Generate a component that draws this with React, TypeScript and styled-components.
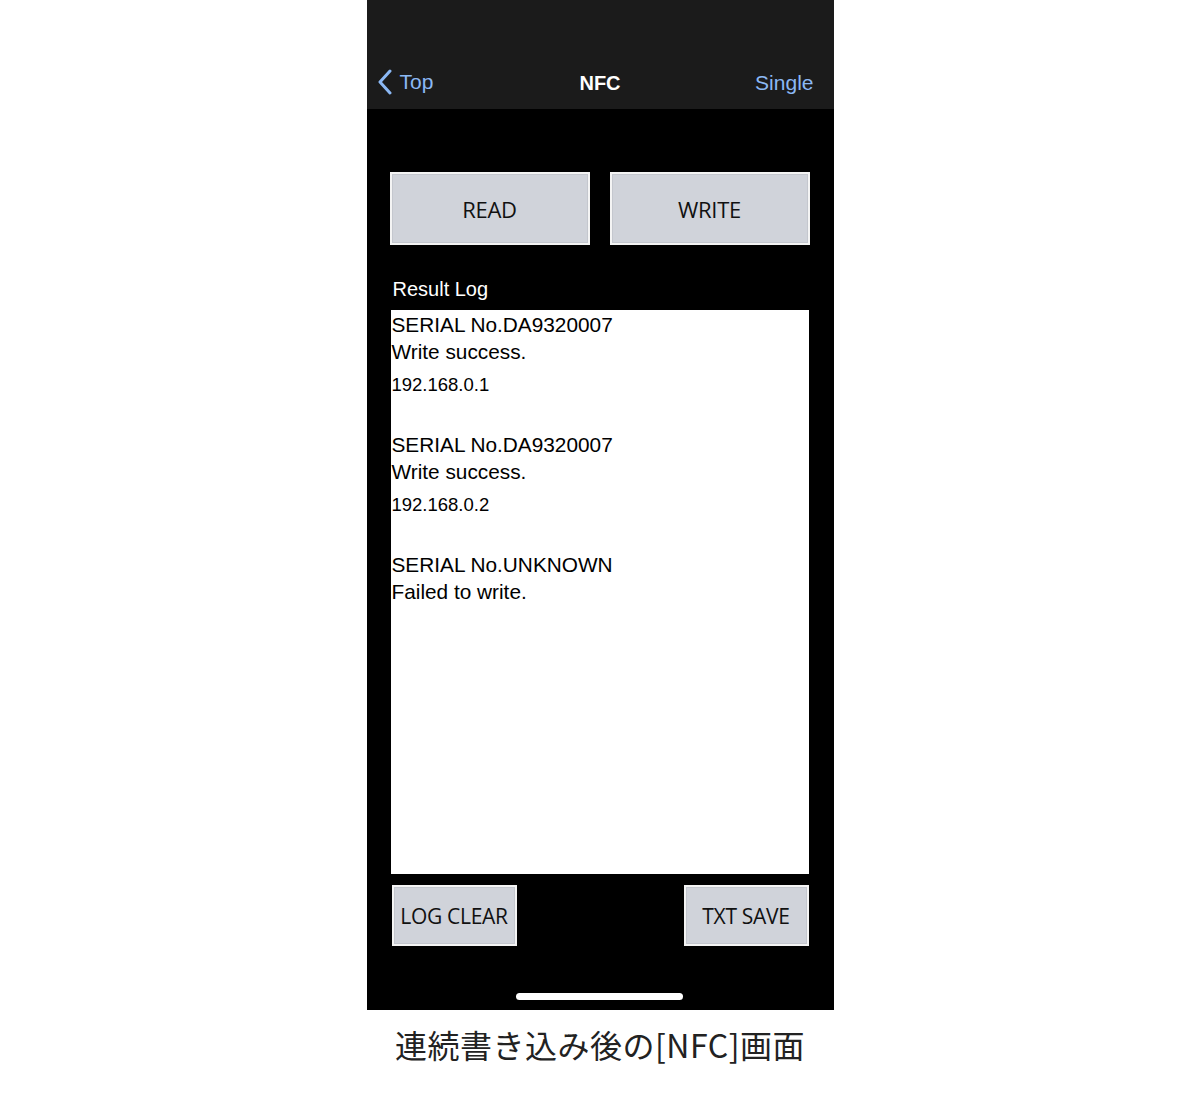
import { createGlobalStyle, styled } from "styled-components"

const Global = createGlobalStyle`
    html, body {
        margin: 0;
        padding: 0;
        background: #ffffff;
    }
`

const Page = styled.div`
    width: 1200px;
    display: flex;
    flex-direction: column;
    align-items: center;
`

const Phone = styled.div`
    width: 467px;
    height: 1010px;
    background: #000000;
    display: flex;
    flex-direction: column;
    font-family: 'Liberation Sans', Arial, sans-serif;
`

const NavBar = styled.div`
    height: 109px;
    background: #1b1b1b;
    display: flex;
    align-items: flex-end;
    justify-content: space-between;
    padding: 0 20px 14px 10px;
    box-sizing: border-box;
    position: relative;
    font-size: 21px;

    .back, .single {
        color: #8bb8f4;
        display: flex;
        align-items: center;
        gap: 7px;
    }

    .title {
        position: absolute;
        left: 0;
        right: 0;
        bottom: 14px;
        text-align: center;
        color: #ffffff;
        font-weight: bold;
        font-size: 20px;
        pointer-events: none;
    }
`

const Body = styled.div`
    flex: 1;
    display: flex;
    flex-direction: column;
    padding: 63px 24px 0 23px;
`

const TopButtons = styled.div`
    display: grid;
    grid-template-columns: 200px 200px;
    justify-content: space-between;
`

const GrayButton = styled.button<{ $w?: number; $h: number; $size: number }>`
    width: ${p => (p.$w ? `${p.$w}px` : "100%")};
    height: ${p => p.$h}px;
    background: #d0d3da;
    border: 2px solid #f4f4f4;
    box-shadow: inset 0 0 0 1px #c4c7ce;
    color: #111111;
    font-family: 'Open Sans', sans-serif;
    font-size: ${p => p.$size}px;
    padding: 0;
    letter-spacing: -0.3px;
`

const LogLabel = styled.div`
    color: #ffffff;
    font-size: 20px;
    margin: 34px 0 0 3px;
    line-height: 20px;
    height: 31px;
`

const LogBox = styled.div`
    margin-left: 1px;
    width: 418px;
    height: 564px;
    background: #ffffff;
    color: #000000;
    font-size: 20.8px;
    box-sizing: border-box;
    padding: 1px 0 0 1px;
`

const Entry = styled.div`
    margin-bottom: 33px;

    div {
        line-height: 27px;
        height: 27px;
    }

    .ip {
        margin-top: 6px;
        font-size: 18.5px;
    }
`

const BottomButtons = styled.div`
    display: flex;
    justify-content: space-between;
    margin: 11px 1px 0 2px;
`

const HomeBar = styled.div`
    width: 167px;
    height: 7px;
    border-radius: 4px;
    background: #ffffff;
    margin: auto auto 10px;
`

const Caption = styled.div`
    margin-top: 11px;
    font-family: 'Noto Sans CJK JP', sans-serif;
    font-size: 32px;
    color: #222222;
    letter-spacing: 0.5px;
`

const entries = [
    { serial: "SERIAL No.DA9320007", msg: "Write success.", ip: "192.168.0.1" },
    { serial: "SERIAL No.DA9320007", msg: "Write success.", ip: "192.168.0.2" },
    { serial: "SERIAL No.UNKNOWN", msg: "Failed to write." },
]

export default () => <>
    <Global />
    <Page>
        <Phone>
            <NavBar>
                <div className="back">
                    <svg width="16" height="26" viewBox="0 0 16 26">
                        <path d="M13 2 L3 13 L13 24" fill="none" stroke="#8bb8f4" strokeWidth="3" strokeLinecap="round" strokeLinejoin="round" />
                    </svg>
                    <span>Top</span>
                </div>
                <div className="title">NFC</div>
                <div className="single">Single</div>
            </NavBar>
            <Body>
                <TopButtons>
                    <GrayButton $h={73} $size={22}>READ</GrayButton>
                    <GrayButton $h={73} $size={22}>WRITE</GrayButton>
                </TopButtons>
                <LogLabel>Result Log</LogLabel>
                <LogBox>
                    {entries.map((e, i) => (
                        <Entry key={i}>
                            <div>{e.serial}</div>
                            <div>{e.msg}</div>
                            {e.ip && <div className="ip">{e.ip}</div>}
                        </Entry>
                    ))}
                </LogBox>
                <BottomButtons>
                    <GrayButton $w={125} $h={61} $size={21}>LOG CLEAR</GrayButton>
                    <GrayButton $w={125} $h={61} $size={21}>TXT SAVE</GrayButton>
                </BottomButtons>
                <HomeBar />
            </Body>
        </Phone>
        <Caption>連続書き込み後の[NFC]画面</Caption>
    </Page>
</>
